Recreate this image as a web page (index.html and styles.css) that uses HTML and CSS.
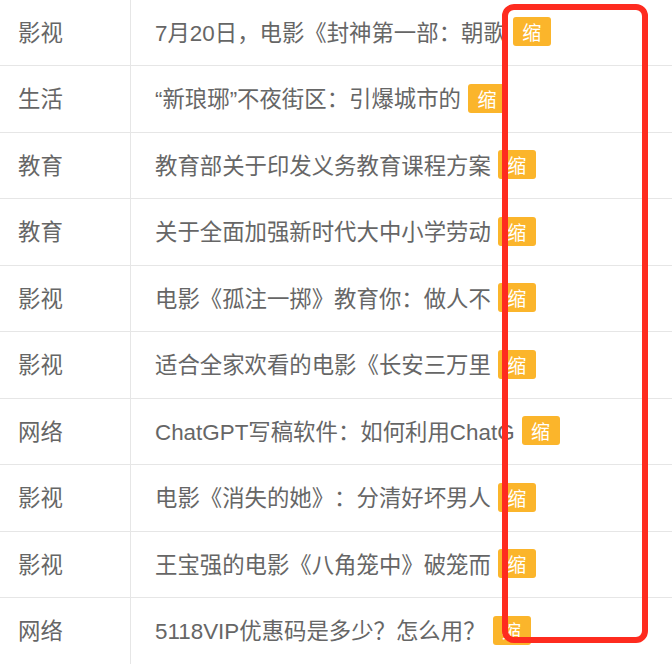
FILE: index.html
```html
<!DOCTYPE html>
<html lang="zh-CN">
<head>
    <meta charset="UTF-8">
    <meta name="viewport" content="width=device-width, initial-scale=1.0">
    <title>文章列表</title>
    <link rel="stylesheet" href="styles.css">
</head>
<body>
    <div class="list-wrap">
        <div class="article-list">
            <div class="row">
                <div class="cell-cat">影视</div>
                <div class="cell-title"><span>7月20日，电影《封神第一部：朝歌</span><span class="tag">缩</span></div>
            </div>
            <div class="row">
                <div class="cell-cat">生活</div>
                <div class="cell-title"><span>“新琅琊”不夜街区：引爆城市的</span><span class="tag">缩</span></div>
            </div>
            <div class="row">
                <div class="cell-cat">教育</div>
                <div class="cell-title"><span>教育部关于印发义务教育课程方案</span><span class="tag">缩</span></div>
            </div>
            <div class="row">
                <div class="cell-cat">教育</div>
                <div class="cell-title"><span>关于全面加强新时代大中小学劳动</span><span class="tag">缩</span></div>
            </div>
            <div class="row">
                <div class="cell-cat">影视</div>
                <div class="cell-title"><span>电影《孤注一掷》教育你：做人不</span><span class="tag">缩</span></div>
            </div>
            <div class="row">
                <div class="cell-cat">影视</div>
                <div class="cell-title"><span>适合全家欢看的电影《长安三万里</span><span class="tag">缩</span></div>
            </div>
            <div class="row">
                <div class="cell-cat">网络</div>
                <div class="cell-title"><span>ChatGPT写稿软件：如何利用ChatG</span><span class="tag">缩</span></div>
            </div>
            <div class="row">
                <div class="cell-cat">影视</div>
                <div class="cell-title"><span>电影《消失的她》：分清好坏男人</span><span class="tag">缩</span></div>
            </div>
            <div class="row">
                <div class="cell-cat">影视</div>
                <div class="cell-title"><span>王宝强的电影《八角笼中》破笼而</span><span class="tag">缩</span></div>
            </div>
            <div class="row">
                <div class="cell-cat">网络</div>
                <div class="cell-title"><span>5118VIP优惠码是多少？怎么用？</span><span class="tag">缩</span></div>
            </div>
        </div>

        <!-- annotation box drawn over the tag column -->
        <div class="highlight-box"></div>
    </div>
</body>
</html>
```

FILE: styles.css
```css
* {
    margin: 0;
    padding: 0;
    box-sizing: border-box;
}

body {
    font-family: "Liberation Sans", "Noto Sans CJK SC", sans-serif;
    background: #fff;
    color: #666;
    width: 672px;
    height: 664px;
    overflow: hidden;
    text-spacing-trim: space-all;
}

.list-wrap {
    position: relative;
    margin-top: -0.5px;
}

.article-list {
    display: flex;
    flex-direction: column;
}

.row {
    display: flex;
    height: 66.5px;
    border-bottom: 1px solid #e6e6e6;
    font-size: 22.4px;
}

.cell-cat {
    width: 131px;
    flex-shrink: 0;
    display: flex;
    align-items: center;
    padding: 0 0 3px 18px;
    border-right: 1px solid #e6e6e6;
}

.cell-title {
    flex: 1;
    display: flex;
    align-items: center;
    gap: 7px;
    padding: 0 0 3px 24px;
    white-space: nowrap;
}

.tag {
    display: inline-flex;
    align-items: center;
    justify-content: center;
    width: 38px;
    height: 29px;
    margin-top: 2px;
    border-radius: 3px;
    background: #fbb52b;
    color: #fff;
    font-size: 19px;
    font-family: "Noto Sans CJK SC", sans-serif;
}

.highlight-box {
    position: absolute;
    left: 502px;
    top: 4.5px;
    width: 146px;
    height: 639px;
    border: 6px solid #fe2b1f;
    border-radius: 12px;
}
```
